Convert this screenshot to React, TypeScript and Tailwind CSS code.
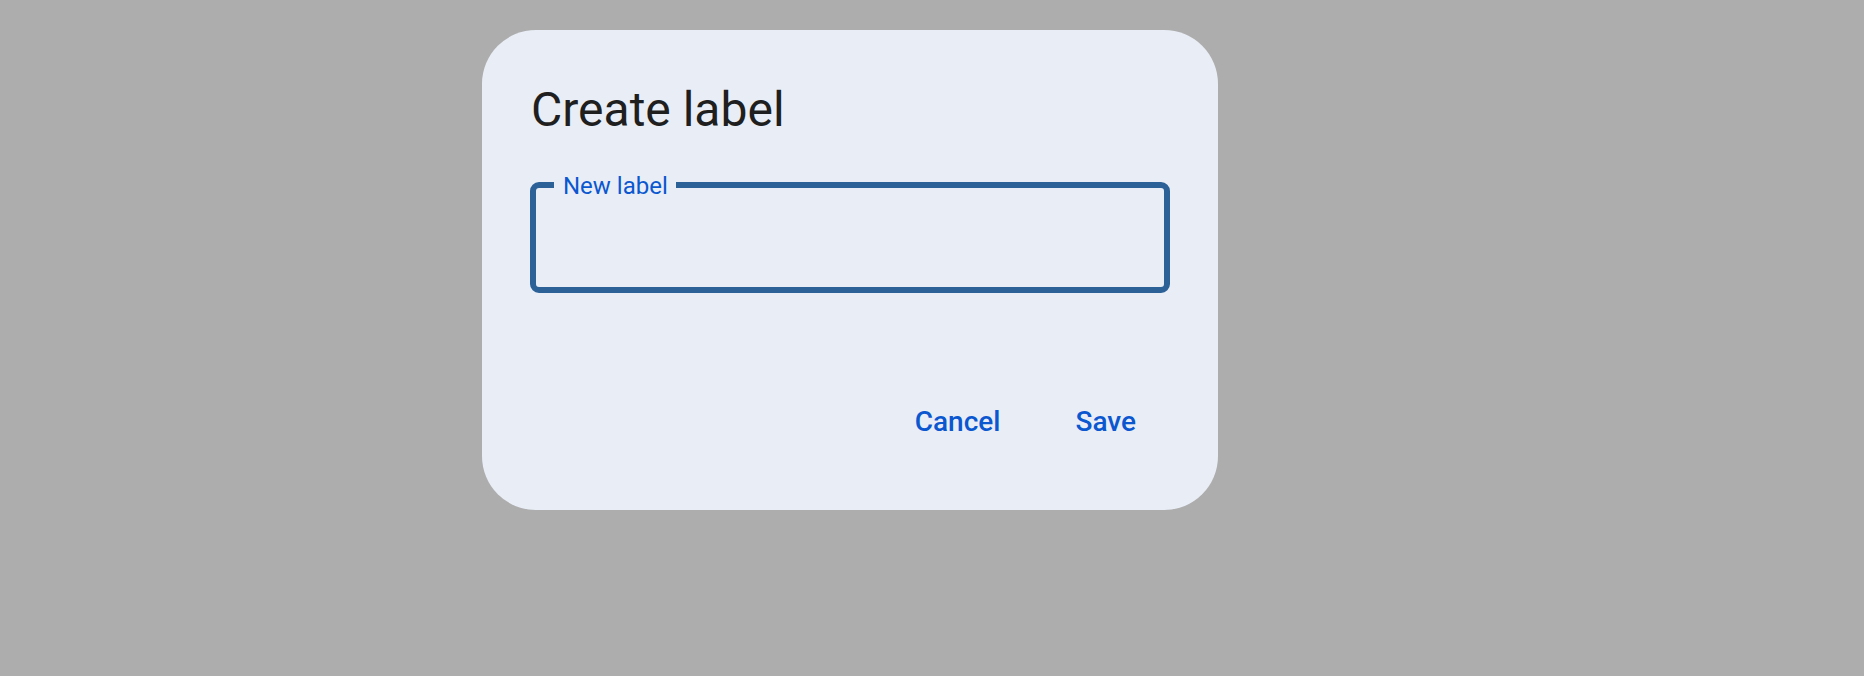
import React from "react";

export default function App() {
  return (
    <div
      className="w-[1864px] h-[676px] bg-[#adadad] overflow-hidden pt-[30px] pl-[482px]"
      style={{ fontFamily: "Roboto, 'Liberation Sans', sans-serif" }}
    >
      <div className="w-[736px] h-[480px] bg-[#e9eef6] rounded-[54px] pt-[48px] px-[48px] flex flex-col">
        <h1 className="text-[48px] leading-[64px] font-normal text-[#1f1f1f] ml-[1px]">Create label</h1>
        <div className="relative mt-[40px] h-[111px] border-[6px] border-[#2b6197] rounded-[9px]">
          <span className="absolute top-[-14px] left-[18px] bg-[#e9eef6] pl-[9px] pr-[8px] text-[24px] leading-[24px] text-[#0b57d0]">
            New label
          </span>
        </div>
        <div className="mt-[109px] flex justify-end gap-[75px] pr-[34px]">
          <button className="text-[28px] leading-[40px] font-medium text-[#0b57d0]">Cancel</button>
          <button className="text-[28px] leading-[40px] font-medium text-[#0b57d0]">Save</button>
        </div>
      </div>
    </div>
  );
}
